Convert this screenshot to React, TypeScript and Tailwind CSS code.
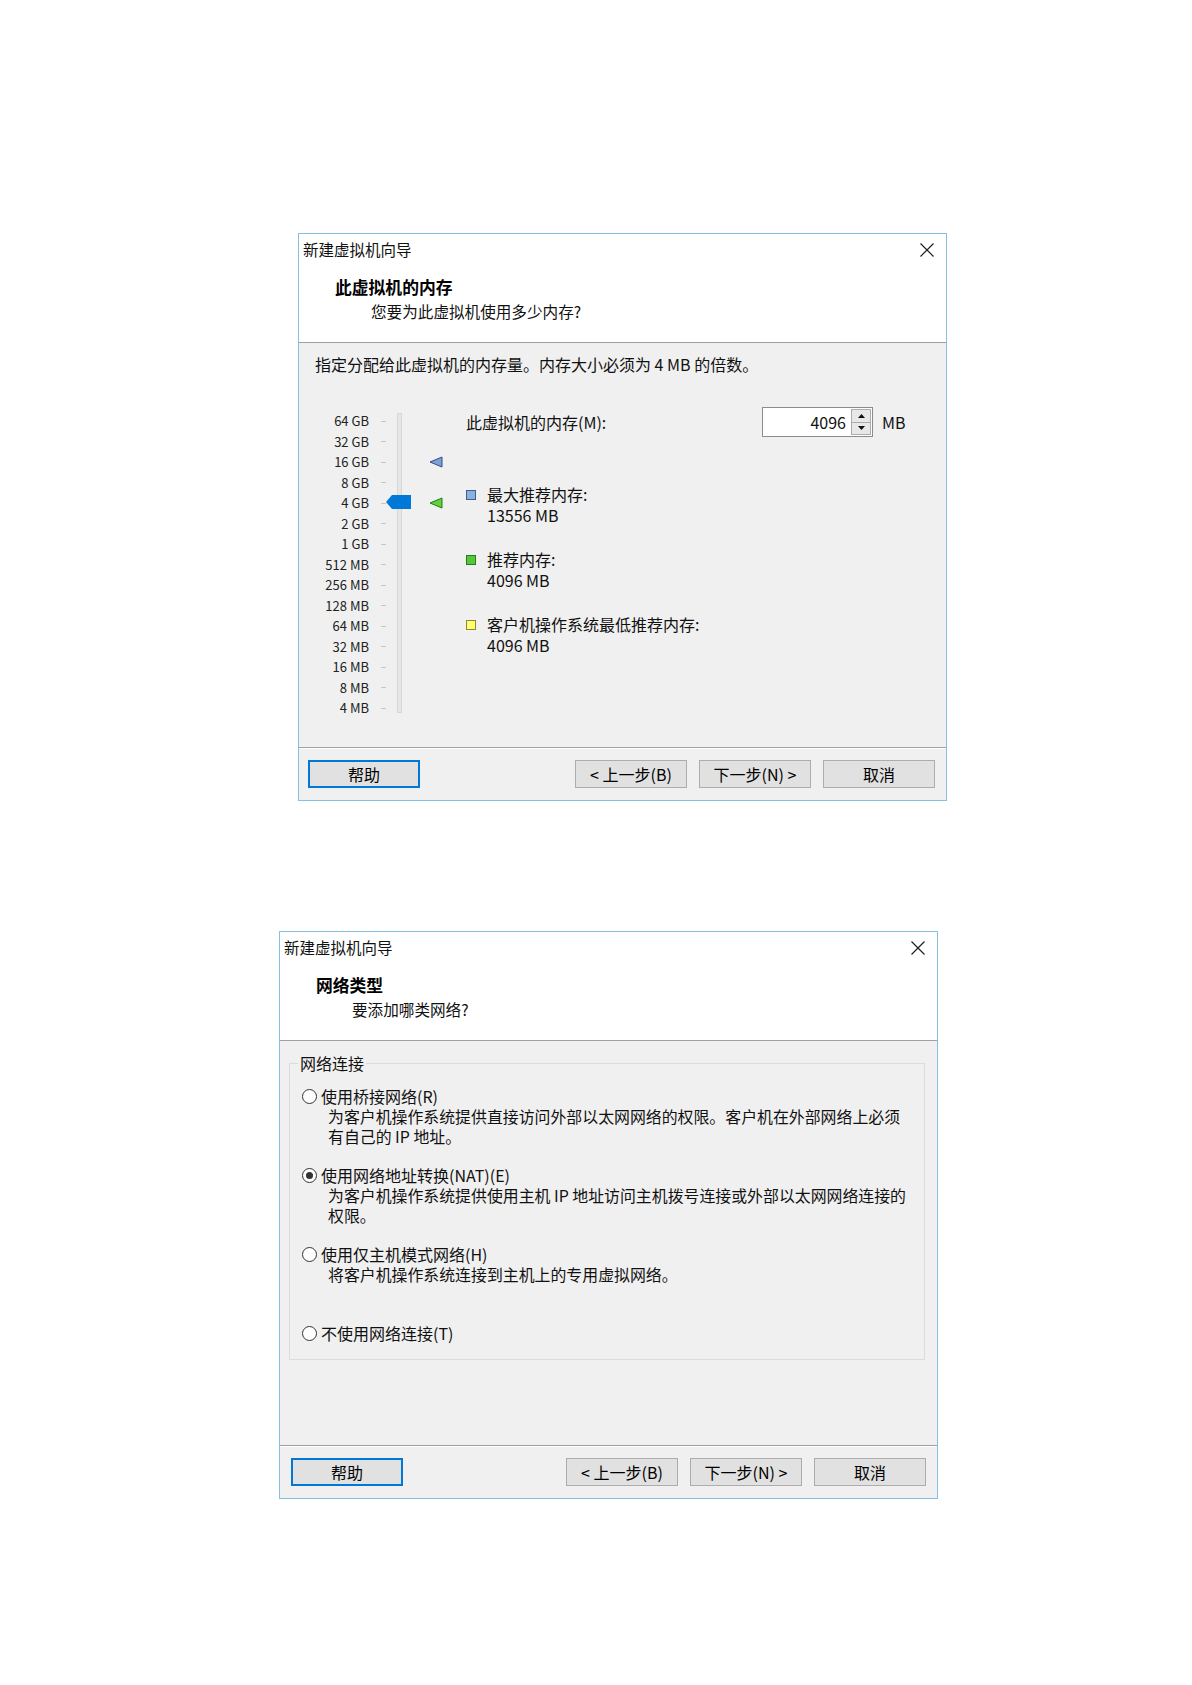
import type { ReactNode } from "react";
import clsx from "clsx";

const sizeLabels = [
  "64 GB", "32 GB", "16 GB", "8 GB", "4 GB", "2 GB", "1 GB",
  "512 MB", "256 MB", "128 MB", "64 MB", "32 MB", "16 MB", "8 MB", "4 MB",
];

const legend = [
  { label: "最大推荐内存:", value: "13556 MB", fill: "bg-[#8db0dc]", edge: "border-[#3d5f96]" },
  { label: "推荐内存:", value: "4096 MB", fill: "bg-[#55c83a]", edge: "border-[#2a7a1c]" },
  { label: "客户机操作系统最低推荐内存:", value: "4096 MB", fill: "bg-[#ffff72]", edge: "border-[#8a8a30]" },
];

const networkOptions = [
  {
    label: "使用桥接网络(R)",
    lines: ["为客户机操作系统提供直接访问外部以太网网络的权限。客户机在外部网络上必须", "有自己的 IP 地址。"],
    checked: false,
    height: "h-[79px]",
  },
  {
    label: "使用网络地址转换(NAT)(E)",
    lines: ["为客户机操作系统提供使用主机 IP 地址访问主机拨号连接或外部以太网网络连接的", "权限。"],
    checked: true,
    height: "h-[79px]",
  },
  {
    label: "使用仅主机模式网络(H)",
    lines: ["将客户机操作系统连接到主机上的专用虚拟网络。"],
    checked: false,
    height: "h-[79px]",
  },
  { label: "不使用网络连接(T)", lines: [], checked: false, height: "h-[21px]" },
];

function CloseIcon() {
  return (
    <svg width="14" height="14" viewBox="0 0 14 14" fill="none">
      <path d="M0.5 0.5L13.5 13.5M13.5 0.5L0.5 13.5" stroke="#1f1f1f" strokeWidth="1.2" />
    </svg>
  );
}

function WizardButton({ label, focused }: { label: string; focused?: boolean }) {
  return (
    <div
      className={clsx(
        "flex h-[28px] w-[112px] items-center justify-center bg-[#e1e1e1] text-[16px] leading-none text-black",
        focused ? "border-2 border-[#0078d7]" : "border border-[#adadad]"
      )}
    >
      {label}
    </div>
  );
}

interface WizardDialogProps {
  width: string;
  helpMargin: string;
  title: string;
  subtitle: string;
  children: ReactNode;
}

function WizardDialog({ width, helpMargin, title, subtitle, children }: WizardDialogProps) {
  return (
    <div className={clsx("flex h-[568px] flex-col border border-[#86bfe4] bg-white", width)}>
      <div className="flex h-[31px] shrink-0 items-center justify-between pl-[4px] pr-[12px]">
        <span className="text-[15.5px] leading-none text-[#111]">新建虚拟机向导</span>
        <CloseIcon />
      </div>
      <div className="h-[77px] shrink-0 pl-[36px] pt-[11px]">
        <p className="text-[16.8px] font-bold leading-[22px] text-black">{title}</p>
        <p className="mt-[2px] pl-[36px] text-[15.6px] leading-[22px] text-[#111]">{subtitle}</p>
      </div>
      <div className="h-px shrink-0 bg-[#a0a0a0]" />
      <div className="h-[404px] shrink-0 bg-[#f0f0f0]">{children}</div>
      <div className="h-px shrink-0 bg-[#a0a0a0]" />
      <div className="h-px shrink-0 bg-white" />
      <div className="flex flex-1 items-start bg-[#f0f0f0] pt-[11px]">
        <div className={helpMargin}>
          <WizardButton label="帮助" focused />
        </div>
        <div className="ml-auto mr-[11px] flex gap-[12px]">
          <WizardButton label="< 上一步(B)" />
          <WizardButton label="下一步(N) >" />
          <WizardButton label="取消" />
        </div>
      </div>
    </div>
  );
}

function Marker({ color }: { color: "blue" | "green" }) {
  const fill = color === "blue" ? "#7d9fd2" : "#5fd23c";
  const stroke = color === "blue" ? "#2f4f88" : "#237a14";
  return (
    <svg width="14" height="12" viewBox="0 0 14 12">
      <polygon points="1,6 13,1 13,11" fill={fill} stroke={stroke} strokeWidth="1" strokeLinejoin="round" />
    </svg>
  );
}

function MemoryBody() {
  return (
    <div>
      <p className="pl-[16px] pt-[10px] text-[16px] leading-[22px] text-[#111]">
        指定分配给此虚拟机的内存量。内存大小必须为 4 MB 的倍数。
      </p>

      <div className="relative mt-[32px] flex">
        <div className="w-[70px] pt-[4px] text-right text-[13px] text-[#222]">
          {sizeLabels.map((s) => (
            <div key={s} className="h-[20.5px] leading-[20.5px]">
              {s}
            </div>
          ))}
        </div>
        <div className="w-[28px] pt-[4px]">
          {sizeLabels.map((s) => (
            <div key={s} className="flex h-[20.5px] items-center pl-[12px]">
              <div className="h-px w-[5px] bg-[#c6c6c6]" />
            </div>
          ))}
        </div>
        <div className="mt-[6px] h-[300px] w-[5px] border border-[#d6d6d6] bg-[#e6e6e6]" />

        {/* slider thumb at 4 GB */}
        <svg className="absolute left-[87px] top-[88px]" width="25" height="14" viewBox="0 0 25 14">
          <polygon points="0,7 6,0 25,0 25,14 6,14" fill="#0078d7" />
        </svg>

        <div className="ml-[27px] w-[14px] pt-[4px]">
          {sizeLabels.map((s, i) => (
            <div key={s} className="flex h-[20.5px] items-center">
              {i === 2 && <Marker color="blue" />}
              {i === 4 && <Marker color="green" />}
            </div>
          ))}
        </div>

        <div className="ml-[23px] text-[16px] text-[#111]">
          <div className="flex h-[30px] items-center">
            <span className="w-[296px] leading-none">此虚拟机的内存(M):</span>
            <div className="flex h-[30px] w-[111px] border border-[#8c8c8c] bg-white">
              <div className="flex flex-1 items-center justify-end pr-[5px] leading-none">4096</div>
              <div className="flex w-[21px] flex-col py-[1px] pr-[1px]">
                <div className="flex flex-1 items-center justify-center border border-[#acacac] bg-[#e8e8e8]">
                  <svg width="7" height="4" viewBox="0 0 7 4">
                    <polygon points="0,4 3.5,0 7,4" fill="#111" />
                  </svg>
                </div>
                <div className="flex flex-1 items-center justify-center border border-t-0 border-[#acacac] bg-[#e8e8e8]">
                  <svg width="7" height="4" viewBox="0 0 7 4">
                    <polygon points="0,0 7,0 3.5,4" fill="#111" />
                  </svg>
                </div>
              </div>
            </div>
            <span className="ml-[9px] leading-none">MB</span>
          </div>

          <div className="mt-[47px] flex flex-col gap-[23px]">
            {legend.map((item) => (
              <div key={item.label} className="flex">
                <div className={clsx("mt-[5.5px] h-[10px] w-[10px] border", item.fill, item.edge)} />
                <div className="ml-[11px] leading-[21px]">
                  <p>{item.label}</p>
                  <p>{item.value}</p>
                </div>
              </div>
            ))}
          </div>
        </div>
      </div>
    </div>
  );
}

function Radio({ checked }: { checked: boolean }) {
  return (
    <div className="flex h-[15px] w-[15px] shrink-0 items-center justify-center rounded-full border border-[#333] bg-white">
      {checked && <div className="h-[7px] w-[7px] rounded-full bg-[#333]" />}
    </div>
  );
}

function NetworkBody() {
  return (
    <div className="pl-[9px] pr-[12px] pt-[22px]">
      <div className="relative border border-[#dcdcdc] pb-[15px] pt-[22px]">
        <span className="absolute -top-[11px] left-[8px] bg-[#f0f0f0] px-[2px] text-[16px] leading-[21px] text-[#111]">
          网络连接
        </span>
        {networkOptions.map((opt) => (
          <div key={opt.label} className={clsx("text-[#111]", opt.height)}>
            <div className="flex items-center pl-[12px]">
              <Radio checked={opt.checked} />
              <p className="ml-[4px] text-[16px] leading-[21px]">{opt.label}</p>
            </div>
            <div className="pl-[38px] text-[15.9px] leading-[20px]">
              {opt.lines.map((line) => (
                <p key={line}>{line}</p>
              ))}
            </div>
          </div>
        ))}
      </div>
    </div>
  );
}

export default function App() {
  return (
    <div className="min-h-[1685px] bg-white font-['Noto_Sans_CJK_SC',sans-serif]">
      <div className="flex flex-col">
        <div className="ml-[298px] mt-[233px]">
          <WizardDialog
            width="w-[649px]"
            helpMargin="ml-[9px]"
            title="此虚拟机的内存"
            subtitle="您要为此虚拟机使用多少内存?"
          >
            <MemoryBody />
          </WizardDialog>
        </div>
        <div className="ml-[279px] mt-[130px]">
          <WizardDialog
            width="w-[659px]"
            helpMargin="ml-[11px]"
            title="网络类型"
            subtitle="要添加哪类网络?"
          >
            <NetworkBody />
          </WizardDialog>
        </div>
      </div>
    </div>
  );
}
